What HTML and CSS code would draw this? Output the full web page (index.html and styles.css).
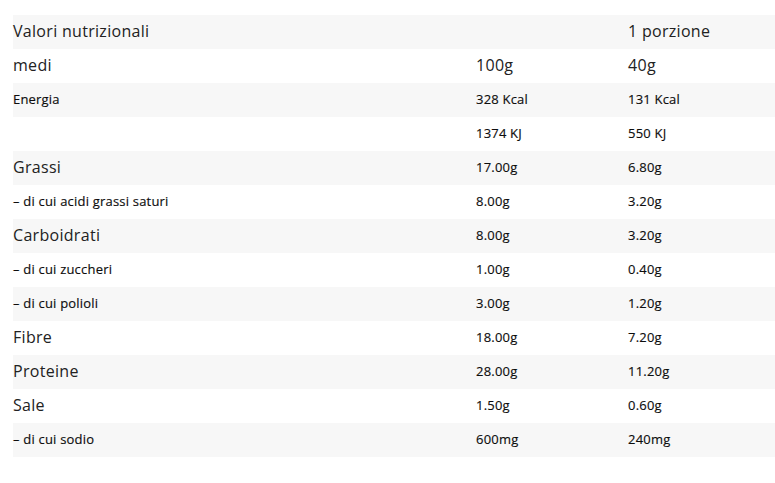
FILE: index.html
```html
<!DOCTYPE html>
<html lang="it">
<head>
<meta charset="utf-8">
<link rel="stylesheet" href="styles.css">
</head>
<body>
<table class="nutri">
  <tr class="big"><td>Valori nutrizionali</td><td></td><td>1 porzione</td></tr>
  <tr class="big"><td>medi</td><td>100g</td><td>40g</td></tr>
  <tr class="small"><td>Energia</td><td>328 Kcal</td><td>131 Kcal</td></tr>
  <tr class="small"><td></td><td>1374 KJ</td><td>550 KJ</td></tr>
  <tr class="mixed"><td>Grassi</td><td>17.00g</td><td>6.80g</td></tr>
  <tr class="small"><td>– di cui acidi grassi saturi</td><td>8.00g</td><td>3.20g</td></tr>
  <tr class="mixed"><td>Carboidrati</td><td>8.00g</td><td>3.20g</td></tr>
  <tr class="small"><td>– di cui zuccheri</td><td>1.00g</td><td>0.40g</td></tr>
  <tr class="small"><td>– di cui polioli</td><td>3.00g</td><td>1.20g</td></tr>
  <tr class="mixed"><td>Fibre</td><td>18.00g</td><td>7.20g</td></tr>
  <tr class="mixed"><td>Proteine</td><td>28.00g</td><td>11.20g</td></tr>
  <tr class="mixed"><td>Sale</td><td>1.50g</td><td>0.60g</td></tr>
  <tr class="small"><td>– di cui sodio</td><td>600mg</td><td>240mg</td></tr>
</table>
</body>
</html>
```
FILE: styles.css
```css
html, body {
  margin: 0;
  padding: 0;
  background: #ffffff;
}
body {
  padding: 15px 0 0 13px;
  font-family: "Open Sans", "DejaVu Sans", sans-serif;
  color: #222222;
}
.nutri {
  border-collapse: collapse;
  width: 770px;
  table-layout: fixed;
}
.nutri td {
  height: 34px;
  padding: 0 0 2px 0;
  box-sizing: border-box;
  vertical-align: middle;
  white-space: nowrap;
}
.nutri td:nth-child(1) { width: 463px; }
.nutri td:nth-child(2) { width: 152px; }
.nutri tr:nth-child(odd) { background: #f7f7f7; }
.big td {
  font-size: 16px;
  font-weight: 400;
  letter-spacing: 0.3px;
}
.small td, .mixed td {
  font-size: 13px;
  font-weight: 500;
  letter-spacing: 0.2px;
  color: #0d0d0d;
  -webkit-text-stroke: 0.15px #0d0d0d;
}
.mixed td:first-child {
  font-size: 16px;
  font-weight: 400;
  letter-spacing: 0.3px;
  color: #222222;
  -webkit-text-stroke: 0;
}
```
